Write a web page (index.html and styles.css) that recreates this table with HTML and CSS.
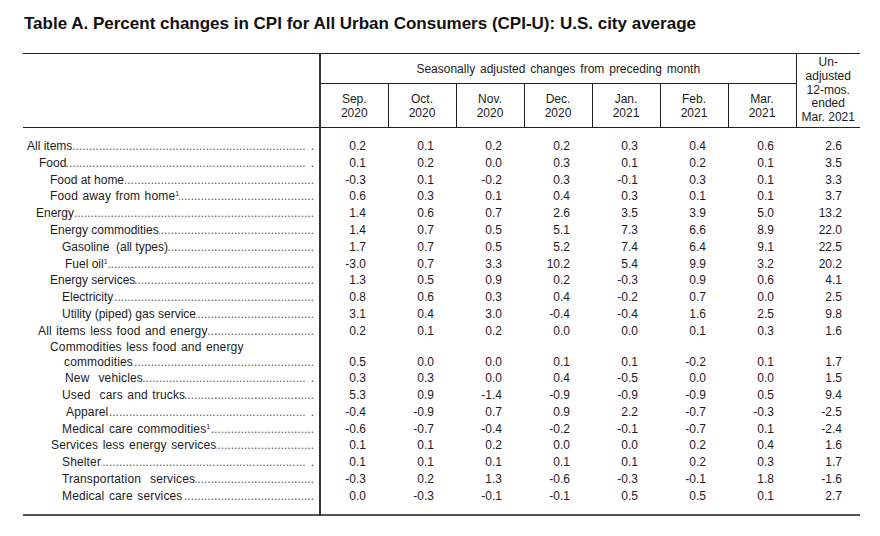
FILE: index.html
```html
<!DOCTYPE html>
<html lang="en">
<head>
<meta charset="utf-8">
<title>Table A. Percent changes in CPI</title>
<link rel="stylesheet" href="styles.css">
</head>
<body>
<div class="page">
  <h1 class="title">Table A. Percent changes in CPI for All Urban Consumers (CPI-U): U.S. city average</h1>
  <table class="cpi">
    <colgroup>
      <col class="c-lbl">
      <col class="c-m" span="7">
      <col class="c-u">
    </colgroup>
    <thead>
      <tr class="h1row">
        <th class="blank" rowspan="2"></th>
        <th class="season" colspan="7">Seasonally adjusted changes from preceding month</th>
        <th class="unadj" rowspan="2">Un-<br>adjusted<br>12-mos.<br>ended<br>Mar. 2021</th>
      </tr>
      <tr class="h2row">
        <th class="mon first">Sep.<br>2020</th>
        <th class="mon">Oct.<br>2020</th>
        <th class="mon">Nov.<br>2020</th>
        <th class="mon">Dec.<br>2020</th>
        <th class="mon">Jan.<br>2021</th>
        <th class="mon">Feb.<br>2021</th>
        <th class="mon">Mar.<br>2021</th>
      </tr>
    </thead>
    <tbody>
      <tr><td class="lbl i0"><div class="lead"><span>All items</span><span class="dots"></span><span class="end">.</span></div></td><td>0.2</td><td>0.1</td><td>0.2</td><td>0.2</td><td>0.3</td><td>0.4</td><td>0.6</td><td class="u">2.6</td></tr>
      <tr><td class="lbl i1"><div class="lead"><span>Food</span><span class="dots"></span><span class="end">.</span></div></td><td>0.1</td><td>0.2</td><td>0.0</td><td>0.3</td><td>0.1</td><td>0.2</td><td>0.1</td><td class="u">3.5</td></tr>
      <tr><td class="lbl i2"><div class="lead"><span>Food at home</span><span class="dots"></span></div></td><td>-0.3</td><td>0.1</td><td>-0.2</td><td>0.3</td><td>-0.1</td><td>0.3</td><td>0.1</td><td class="u">3.3</td></tr>
      <tr><td class="lbl i2"><div class="lead"><span class="wide">Food away from home<sup>1</sup></span><span class="dots"></span></div></td><td>0.6</td><td>0.3</td><td>0.1</td><td>0.4</td><td>0.3</td><td>0.1</td><td>0.1</td><td class="u">3.7</td></tr>
      <tr><td class="lbl i1e"><div class="lead"><span>Energy</span><span class="dots"></span></div></td><td>1.4</td><td>0.6</td><td>0.7</td><td>2.6</td><td>3.5</td><td>3.9</td><td>5.0</td><td class="u">13.2</td></tr>
      <tr><td class="lbl i2"><div class="lead"><span>Energy commodities</span><span class="dots"></span></div></td><td>1.4</td><td>0.7</td><td>0.5</td><td>5.1</td><td>7.3</td><td>6.6</td><td>8.9</td><td class="u">22.0</td></tr>
      <tr><td class="lbl i3"><div class="lead"><span>Gasoline&nbsp; (all types)</span><span class="dots"></span></div></td><td>1.7</td><td>0.7</td><td>0.5</td><td>5.2</td><td>7.4</td><td>6.4</td><td>9.1</td><td class="u">22.5</td></tr>
      <tr><td class="lbl i3b"><div class="lead"><span>Fuel oil<sup>1</sup></span><span class="dots"></span></div></td><td>-3.0</td><td>0.7</td><td>3.3</td><td>10.2</td><td>5.4</td><td>9.9</td><td>3.2</td><td class="u">20.2</td></tr>
      <tr><td class="lbl i2"><div class="lead"><span>Energy services</span><span class="dots"></span></div></td><td>1.3</td><td>0.5</td><td>0.9</td><td>0.2</td><td>-0.3</td><td>0.9</td><td>0.6</td><td class="u">4.1</td></tr>
      <tr><td class="lbl i3"><div class="lead"><span>Electricity</span><span class="dots"></span></div></td><td>0.8</td><td>0.6</td><td>0.3</td><td>0.4</td><td>-0.2</td><td>0.7</td><td>0.0</td><td class="u">2.5</td></tr>
      <tr><td class="lbl i3"><div class="lead"><span>Utility (piped) gas service</span><span class="dots"></span></div></td><td>3.1</td><td>0.4</td><td>3.0</td><td>-0.4</td><td>-0.4</td><td>1.6</td><td>2.5</td><td class="u">9.8</td></tr>
      <tr><td class="lbl i1a"><div class="lead"><span class="wide">All items less food and energy</span><span class="dots"></span></div></td><td>0.2</td><td>0.1</td><td>0.2</td><td>0.0</td><td>0.0</td><td>0.1</td><td>0.3</td><td class="u">1.6</td></tr>
      <tr class="two"><td class="lbl i2"><div class="t1 wide">Commodities less food and energy</div><div class="lead hang"><span class="wide">commodities</span><span class="dots"></span></div></td><td>0.5</td><td>0.0</td><td>0.0</td><td>0.1</td><td>0.1</td><td>-0.2</td><td>0.1</td><td class="u">1.7</td></tr>
      <tr><td class="lbl i3b"><div class="lead"><span class="wide">New&nbsp; vehicles</span><span class="dots"></span><span class="end">.</span></div></td><td>0.3</td><td>0.3</td><td>0.0</td><td>0.4</td><td>-0.5</td><td>0.0</td><td>0.0</td><td class="u">1.5</td></tr>
      <tr><td class="lbl i3"><div class="lead"><span class="wide">Used&nbsp; cars and trucks</span><span class="dots"></span></div></td><td>5.3</td><td>0.9</td><td>-1.4</td><td>-0.9</td><td>-0.9</td><td>-0.9</td><td>0.5</td><td class="u">9.4</td></tr>
      <tr><td class="lbl i3c"><div class="lead"><span class="wide">Apparel</span><span class="dots"></span><span class="end">.</span></div></td><td>-0.4</td><td>-0.9</td><td>0.7</td><td>0.9</td><td>2.2</td><td>-0.7</td><td>-0.3</td><td class="u">-2.5</td></tr>
      <tr><td class="lbl i3"><div class="lead"><span class="wide">Medical care commodities<sup>1</sup></span><span class="dots"></span></div></td><td>-0.6</td><td>-0.7</td><td>-0.4</td><td>-0.2</td><td>-0.1</td><td>-0.7</td><td>0.1</td><td class="u">-2.4</td></tr>
      <tr><td class="lbl i2b"><div class="lead"><span class="wide">Services less energy services</span><span class="dots"></span></div></td><td>0.1</td><td>0.1</td><td>0.2</td><td>0.0</td><td>0.0</td><td>0.2</td><td>0.4</td><td class="u">1.6</td></tr>
      <tr><td class="lbl i3"><div class="lead"><span class="wide">Shelter</span><span class="dots"></span><span class="end">.</span></div></td><td>0.1</td><td>0.1</td><td>0.1</td><td>0.1</td><td>0.1</td><td>0.2</td><td>0.3</td><td class="u">1.7</td></tr>
      <tr><td class="lbl i3"><div class="lead"><span class="wide">Transportation&nbsp; services</span><span class="dots"></span></div></td><td>-0.3</td><td>0.2</td><td>1.3</td><td>-0.6</td><td>-0.3</td><td>-0.1</td><td>1.8</td><td class="u">-1.6</td></tr>
      <tr><td class="lbl i3"><div class="lead"><span class="wide">Medical care services</span><span class="dots"></span></div></td><td>0.0</td><td>-0.3</td><td>-0.1</td><td>-0.1</td><td>0.5</td><td>0.5</td><td>0.1</td><td class="u">2.7</td></tr>
    </tbody>
  </table>
</div>
</body>
</html>
```

FILE: styles.css
```css
* { box-sizing: border-box; }

html, body {
  margin: 0;
  background: #ffffff;
}

body {
  font-family: "Liberation Sans", Arial, sans-serif;
  color: #1c1c1c;
}

.page {
  padding: 14px 0 0 22px;
}

.title {
  margin: 0 0 0 2px;
  font-size: 17px;
  line-height: 20px;
  font-weight: bold;
  color: #111;
}

.cpi {
  margin: 19px 0 0 1px;
  width: 837px;
  table-layout: fixed;
  border-collapse: collapse;
  font-size: 12px;
  border-top: 1px solid #222;
  border-bottom: 2px solid #555;
}

.c-lbl { width: 297px; }
.c-m { width: 68px; }
.c-u { width: 64px; }

.cpi th {
  padding: 0;
  font-weight: normal;
  text-align: center;
  vertical-align: middle;
}

.h1row th { height: 30px; }

.blank {
  border-right: 2px solid #333;
  border-bottom: 1px solid #222;
}

.season {
  border-bottom: 1px solid #222;
  line-height: 14px;
  word-spacing: 1.5px;
}

.unadj {
  border-left: 1px solid #222;
  border-bottom: 1px solid #222;
  line-height: 13.8px;
  padding-top: 3px;
}

.h2row th {
  height: 44px;
  line-height: 14px;
  border-bottom: 1px solid #222;
  border-left: 1px solid #222;
}

.h2row th.first { border-left: 2px solid #333; }

.cpi td {
  padding: 0 22px 0 0;
  line-height: 16.8px;
  height: 16.8px;
  text-align: right;
  vertical-align: bottom;
  white-space: nowrap;
}

.cpi td.u { padding-right: 18px; }

.cpi td.lbl {
  text-align: left;
  padding-right: 5px;
  border-right: 2px solid #333;
}

.cpi tbody tr:first-child td { padding-top: 10px; height: 26.8px; }
.cpi tbody tr:last-child td { padding-bottom: 9px; height: 25.8px; }

.two td { line-height: 15.35px; height: 30.7px; }

.wide { word-spacing: 1px; letter-spacing: 0.15px; }

.i0 { padding-left: 4px !important; }
.i1 { padding-left: 16px !important; }
.i1e { padding-left: 13px !important; }
.i1a { padding-left: 15px !important; }
.i2 { padding-left: 27px !important; }
.i2b { padding-left: 28px !important; }
.i3 { padding-left: 39px !important; }
.i3b { padding-left: 42px !important; }
.i3c { padding-left: 43px !important; }

.lead {
  display: flex;
  white-space: nowrap;
}

.lead.hang { padding-left: 14px; }

.dots {
  flex: 1;
  min-width: 0;
  overflow: hidden;
  direction: rtl;
  color: #555;
}

.dots::before {
  content: "....................................................................................................";
}

.end {
  padding-left: 5px;
  color: #333;
}

sup {
  font-size: 7px;
  line-height: 0;
  vertical-align: 4px;
}
```
